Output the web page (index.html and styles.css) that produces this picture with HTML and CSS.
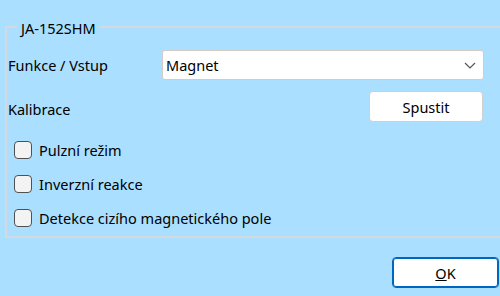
FILE: index.html
```html
<!DOCTYPE html>
<html lang="cs">
<head>
    <meta charset="UTF-8">
    <title>JA-152SHM</title>
    <link rel="stylesheet" href="styles.css">
</head>
<body>
    <div class="dialog">
        <div class="group">
            <span class="group-title">JA-152SHM</span>
            <div class="group-body">
                <div class="row row-func">
                    <span class="label">Funkce / Vstup</span>
                    <div class="combo">
                        <span>Magnet</span>
                        <svg class="chevron" width="12" height="7" viewBox="0 0 12 7">
                            <path d="M1 1 L6 6 L11 1" fill="none" stroke="#555" stroke-width="1.2"/>
                        </svg>
                    </div>
                </div>
                <div class="row row-cal">
                    <span class="label">Kalibrace</span>
                    <button class="btn">Spustit</button>
                </div>
                <div class="checks">
                    <label class="check"><span class="box"></span>Pulzní režim</label>
                    <label class="check"><span class="box"></span>Inverzní reakce</label>
                    <label class="check"><span class="box"></span>Detekce cizího magnetického pole</label>
                </div>
            </div>
        </div>
        <div class="footer">
            <button class="btn btn-ok"><u>O</u>K</button>
        </div>
    </div>
</body>
</html>
```

FILE: styles.css
```css
/* Base */
html, body {
    margin: 0;
    padding: 0;
    overflow: hidden;
}

body {
    width: 500px;
    height: 296px;
    background: #aadfff;
    font-family: 'Noto Sans', 'Open Sans', sans-serif;
    font-size: 14.5px;
    color: #000;
}

.dialog {
    padding: 26px 0 0 5px;
}

/* Group box */
.group {
    position: relative;
    width: 510px;
    height: 208px;
    border-top: 2px solid #d3dadf;
    border-left: 2px solid #d3dadf;
    border-bottom: 2px solid #d3dadf;
}

.group-title {
    position: absolute;
    top: -10px;
    left: 10px;
    padding: 0 4px;
    background: #aadfff;
    line-height: 20px;
}

.group-body {
    width: 476px;
    padding: 22px 0 0 1px;
}

.row {
    display: flex;
    align-items: center;
}

.row-func .label {
    width: 154px;
}

.combo {
    flex: 1;
    height: 28px;
    background: #fff;
    border: 1px solid #d4cbc6;
    border-radius: 3px;
    display: flex;
    align-items: center;
    justify-content: space-between;
    padding: 0 7px 0 3px;
}

.row-cal {
    justify-content: space-between;
    margin-top: 11px;
}

.row-cal .label {
    padding-top: 4px;
}

/* Buttons */
.btn {
    width: 114px;
    height: 31px;
    background: #fff;
    border: 1px solid #d0d0d0;
    border-radius: 4px;
    font: inherit;
    color: #000;
    padding: 0;
    margin-right: 1px;
}

/* Checkboxes */
.checks {
    display: flex;
    flex-direction: column;
    gap: 16px;
    padding: 19px 0 0 6px;
}

.check {
    display: flex;
    align-items: center;
    gap: 7px;
    height: 18px;
}

.box {
    width: 16px;
    height: 16px;
    border: 1px solid #505050;
    border-radius: 4px;
    background: #f3f3f3;
}

/* Footer */
.footer {
    display: flex;
    justify-content: flex-end;
    padding: 19px 1px 0 0;
}

.btn-ok {
    width: 107px;
    border: 1px solid #0067c0;
    box-shadow: inset 0 0 0 1px #0067c0;
    margin: 0;
}
```
